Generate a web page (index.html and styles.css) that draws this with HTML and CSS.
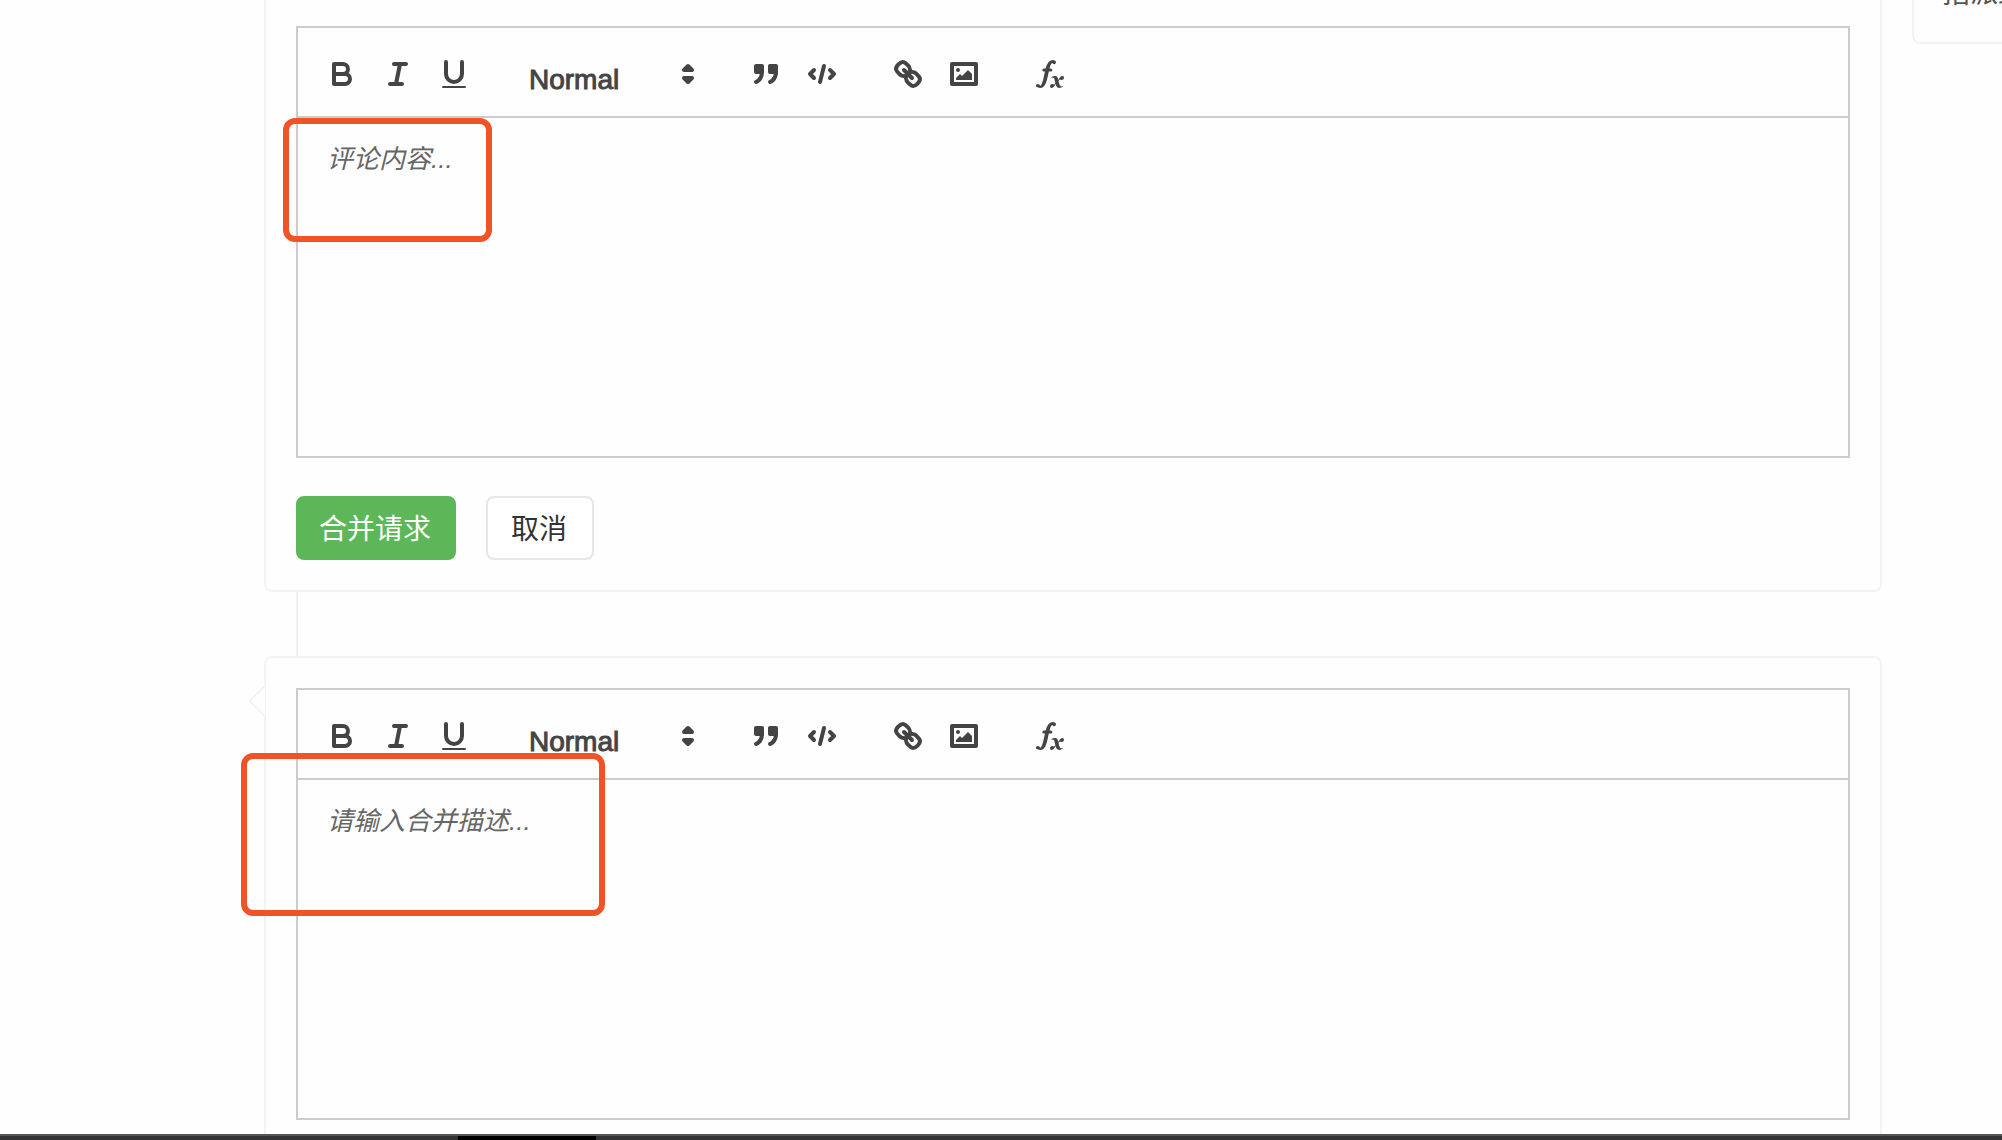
FILE: index.html
```html
<!DOCTYPE html>
<html lang="zh-CN">
<head>
    <meta charset="UTF-8">
    <meta name="viewport" content="width=device-width, initial-scale=1.0">
    <title>合并请求</title>
    <link rel="stylesheet" href="styles.css">
</head>
<body>
    <!-- Toolbar icons -->
    <svg class="sprite" aria-hidden="true">
        <symbol id="i-bold" viewBox="0 0 18 18">
            <path class="stroke" d="M5,4H9.5A2.5,2.5,0,0,1,12,6.5v0A2.5,2.5,0,0,1,9.5,9H5A0,0,0,0,1,5,9V4A0,0,0,0,1,5,4Z"/>
            <path class="stroke" d="M5,9h5.5A2.5,2.5,0,0,1,13,11.5v0A2.5,2.5,0,0,1,10.5,14H5a0,0,0,0,1,0,0V9A0,0,0,0,1,5,9Z"/>
        </symbol>
        <symbol id="i-italic" viewBox="0 0 18 18">
            <path class="stroke" d="M7,4H13M5,14H11M8,14L10,4"/>
        </symbol>
        <symbol id="i-underline" viewBox="0 0 18 18">
            <path class="stroke" d="M5,3V9a4.012,4.012,0,0,0,4,4H9a4.012,4.012,0,0,0,4-4V3"/>
            <rect class="fill" height="1" rx="0.5" ry="0.5" width="12" x="3" y="15"/>
        </symbol>
        <symbol id="i-updown" viewBox="0 0 18 18">
            <polygon class="stroke" points="7 11 9 13 11 11 7 11"/>
            <polygon class="stroke" points="7 7 9 5 11 7 7 7"/>
        </symbol>
        <symbol id="i-quote" viewBox="0 0 18 18">
            <rect class="fill stroke-on" height="3" width="3" x="4" y="5"/>
            <rect class="fill stroke-on" height="3" width="3" x="11" y="5"/>
            <path class="fill stroke-on" d="M7,8c0,4.031-3,5-3,5"/>
            <path class="fill stroke-on" d="M14,8c0,4.031-3,5-3,5"/>
        </symbol>
        <symbol id="i-code" viewBox="0 0 18 18">
            <polyline class="stroke" points="5 7 3 9 5 11"/>
            <polyline class="stroke" points="13 7 15 9 13 11"/>
            <line class="stroke" x1="10" x2="8" y1="5" y2="13"/>
        </symbol>
        <symbol id="i-link" viewBox="0 0 18 18">
            <line class="stroke" x1="7" x2="11" y1="7" y2="11"/>
            <path class="stroke" d="M8.9,4.577a3.476,3.476,0,0,1,.36,4.679A3.476,3.476,0,0,1,4.577,8.9C3.185,7.5,2.035,6.4,4.217,4.217S7.5,3.185,8.9,4.577Z"/>
            <path class="stroke" d="M13.423,9.1a3.476,3.476,0,0,0-4.679-.36,3.476,3.476,0,0,0,.36,4.679c1.392,1.392,2.5,2.542,4.679.36S14.815,10.5,13.423,9.1Z"/>
        </symbol>
        <symbol id="i-image" viewBox="0 0 18 18">
            <rect class="stroke" height="10" width="12" x="3" y="4"/>
            <circle class="fill" cx="6" cy="7" r="1"/>
            <polyline class="fill" points="5 12 5 11 7 9 8 10 11 7 13 9 13 12 5 12"/>
        </symbol>
        <symbol id="i-formula" viewBox="0 0 18 18">
            <path class="fill" d="M11.759,2.482a2.561,2.561,0,0,0-3.53.607A7.656,7.656,0,0,0,6.8,6.2C6.109,9.188,5.275,14.677,4.15,14.927a1.545,1.545,0,0,0-1.3-.933A0.922,0.922,0,0,0,2,15.036S1.954,16,4.119,16s3.091-2.691,3.7-5.553c0.177-.826.36-1.726,0.554-2.6L8.775,6.2c0.381-1.421.807-2.521,1.306-2.676a1.014,1.014,0,0,0,1.02.56A0.966,0.966,0,0,0,11.759,2.482Z"/>
            <rect class="fill" height="1.6" rx="0.8" ry="0.8" width="5" x="5.15" y="6.2"/>
            <path class="fill" d="M13.663,12.027a1.662,1.662,0,0,1,.266-0.276q0.193,0.069.456,0.138a2.1,2.1,0,0,0,.535.069,1.075,1.075,0,0,0,.767-0.3,1.044,1.044,0,0,0,.314-0.8,0.84,0.84,0,0,0-.238-0.619,0.8,0.8,0,0,0-.594-0.239,1.154,1.154,0,0,0-.781.3,4.607,4.607,0,0,0-.781,1q-0.091.15-.218,0.346l-0.246.38c-0.068-.288-0.137-0.582-0.212-0.885-0.459-1.847-2.494-.984-2.941-0.8-0.482.2-.353,0.647-0.094,0.529a0.869,0.869,0,0,1,1.281.585c0.217,0.751.377,1.436,0.527,2.038a5.688,5.688,0,0,1-.362.467,2.69,2.69,0,0,1-.264.271q-0.221-.08-0.471-0.147a2.029,2.029,0,0,0-.522-0.066,1.079,1.079,0,0,0-.768.3A1.058,1.058,0,0,0,9,15.131a0.82,0.82,0,0,0,.832.852,1.134,1.134,0,0,0,.787-0.3,5.11,5.11,0,0,0,.776-0.993q0.141-.219.215-0.34c0.046-.076.122-0.194,0.223-0.346a2.786,2.786,0,0,0,.918,1.726,2.582,2.582,0,0,0,2.376-.185c0.317-.181.212-0.565,0-0.494A0.807,0.807,0,0,1,14.176,15a5.159,5.159,0,0,1-.913-2.446l0,0Q13.487,12.24,13.663,12.027Z"/>
        </symbol>
    </svg>

    <div class="page">
        <main class="timeline">
            <form class="card card-first">
                <div class="editor">
                    <div class="toolbar">
                        <div class="formats">
                            <button type="button" class="tool" aria-label="Bold"><svg><use href="#i-bold"/></svg></button>
                            <button type="button" class="tool" aria-label="Italic"><svg><use href="#i-italic"/></svg></button>
                            <button type="button" class="tool" aria-label="Underline"><svg><use href="#i-underline"/></svg></button>
                        </div>
                        <div class="picker">
                            <select aria-label="Heading">
                                <option>Normal</option>
                            </select>
                            <svg><use href="#i-updown"/></svg>
                        </div>
                        <div class="formats">
                            <button type="button" class="tool" aria-label="Quote"><svg><use href="#i-quote"/></svg></button>
                            <button type="button" class="tool" aria-label="Code"><svg><use href="#i-code"/></svg></button>
                        </div>
                        <div class="formats">
                            <button type="button" class="tool" aria-label="Link"><svg><use href="#i-link"/></svg></button>
                            <button type="button" class="tool" aria-label="Image"><svg><use href="#i-image"/></svg></button>
                        </div>
                        <div class="formats">
                            <button type="button" class="tool" aria-label="Formula"><svg><use href="#i-formula"/></svg></button>
                        </div>
                    </div>
                    <textarea class="content" aria-label="评论内容" placeholder="评论内容..."></textarea>
                    <div class="mark mark-comment"></div>
                </div>
                <div class="actions">
                    <button type="submit" class="btn btn-green">合并请求</button>
                    <button type="button" class="btn btn-plain">取消</button>
                </div>
            </form>

            <div class="connector"></div>

            <form class="card card-arrow">
                <div class="editor">
                    <div class="toolbar">
                        <div class="formats">
                            <button type="button" class="tool" aria-label="Bold"><svg><use href="#i-bold"/></svg></button>
                            <button type="button" class="tool" aria-label="Italic"><svg><use href="#i-italic"/></svg></button>
                            <button type="button" class="tool" aria-label="Underline"><svg><use href="#i-underline"/></svg></button>
                        </div>
                        <div class="picker">
                            <select aria-label="Heading">
                                <option>Normal</option>
                            </select>
                            <svg><use href="#i-updown"/></svg>
                        </div>
                        <div class="formats">
                            <button type="button" class="tool" aria-label="Quote"><svg><use href="#i-quote"/></svg></button>
                            <button type="button" class="tool" aria-label="Code"><svg><use href="#i-code"/></svg></button>
                        </div>
                        <div class="formats">
                            <button type="button" class="tool" aria-label="Link"><svg><use href="#i-link"/></svg></button>
                            <button type="button" class="tool" aria-label="Image"><svg><use href="#i-image"/></svg></button>
                        </div>
                        <div class="formats">
                            <button type="button" class="tool" aria-label="Formula"><svg><use href="#i-formula"/></svg></button>
                        </div>
                    </div>
                    <textarea class="content" aria-label="合并描述" placeholder="请输入合并描述..."></textarea>
                    <div class="mark mark-merge"></div>
                </div>
            </form>
        </main>

        <aside class="sidebar">
            <div class="side-title">指派给</div>
        </aside>
    </div>

    <div class="dock"><div class="dock-item"></div></div>
</body>
</html>
```
FILE: styles.css
```css
* {
    box-sizing: border-box;
}
body {
    margin: 0;
    height: 100vh;
    overflow: hidden;
    background: #fefefe;
    color: #333;
    font-family: "Liberation Sans", "Noto Sans CJK SC", sans-serif;
    font-size: 28px;
}
button, select, textarea {
    font-family: inherit;
    margin: 0;
}
.sprite {
    display: none;
}
.page {
    display: flex;
    align-items: flex-start;
    gap: 30px;
    padding-left: 264px;
}
.timeline {
    flex: 1;
    min-width: 0;
}

/* cards */
.card {
    position: relative;
    padding: 30px;
    border: 2px solid #f3f3f3;
    border-radius: 8px;
}
.card-first {
    padding-top: 26px;
    border-top: 0;
    border-top-left-radius: 0;
    border-top-right-radius: 0;
}
.card-arrow::before {
    content: "";
    position: absolute;
    left: -13px;
    top: 31px;
    width: 22px;
    height: 22px;
    background: #fefefe;
    border-left: 2px solid #f3f3f3;
    border-bottom: 2px solid #f3f3f3;
    transform: rotate(45deg);
    clip-path: polygon(0 0, 100% 100%, 0 100%);
}
.connector {
    height: 64px;
    margin-left: 32px;
    border-left: 2px solid #eee;
}

/* editor */
.editor {
    position: relative;
    border: 2px solid #ccc;
}
.toolbar {
    display: flex;
    gap: 30px;
    height: 90px;
    padding: 22px 16px 0;
    border-bottom: 2px solid #ccc;
}
.formats {
    display: flex;
}
.tool {
    width: 56px;
    height: 48px;
    padding: 6px 10px;
    background: none;
    border: 0;
    cursor: pointer;
}
.tool svg, .picker svg {
    display: block;
    width: 36px;
    height: 36px;
}
.stroke {
    fill: none;
    stroke: #444;
    stroke-width: 2;
    stroke-linecap: round;
    stroke-linejoin: round;
}
.fill {
    fill: #444;
}
.stroke-on {
    stroke: #444;
    stroke-width: 2;
    stroke-linecap: round;
    stroke-linejoin: round;
}
.picker {
    position: relative;
    width: 196px;
    height: 48px;
}
.picker select {
    width: 100%;
    height: 60px;
    padding: 0 40px 2px 17px;
    appearance: none;
    background: none;
    border: 0;
    color: #444;
    font-size: 28px;
    -webkit-text-stroke: 1px #444;
}
.picker svg {
    position: absolute;
    right: 2px;
    top: 6px;
}
.content {
    display: block;
    width: 100%;
    height: 338px;
    padding: 24px 29px;
    background: none;
    border: 0;
    resize: none;
    outline: 0;
    font-size: 26px;
    line-height: 34px;
}
.content::placeholder {
    color: #666;
    font-style: italic;
}

/* buttons */
.actions {
    display: flex;
    gap: 30px;
    padding-top: 38px;
}
.btn {
    height: 64px;
    border: 2px solid #e6e6e6;
    border-radius: 8px;
    font-size: 28px;
    cursor: pointer;
}
.btn-green {
    padding: 0 23px 2px 21px;
    background: #5bb757;
    border-color: #5bb757;
    color: #fff;
}
.btn-plain {
    padding: 0 25px 2px 23px;
    background: #fff;
    color: #333;
}

/* red highlight frames over the editors */
.mark {
    position: absolute;
    border: 6px solid #f15226;
    border-radius: 12px;
    pointer-events: none;
}
.mark-comment {
    left: -15px;
    top: 90px;
    width: 209px;
    height: 124px;
}
.mark-merge {
    left: -57px;
    top: 63px;
    width: 364px;
    height: 163px;
}

/* sidebar */
.sidebar {
    width: 90px;
    height: 44px;
    overflow: hidden;
    padding-left: 28px;
    border-left: 2px solid #f3f3f3;
    border-bottom: 2px solid #f3f3f3;
    border-bottom-left-radius: 8px;
}
.side-title {
    margin-top: -26px;
    line-height: 40px;
    white-space: nowrap;
    color: #555;
}

/* dark strip along the bottom */
.dock {
    position: fixed;
    left: 0;
    right: 0;
    bottom: 0;
    height: 6px;
    padding-left: 458px;
    background: #333335;
    border-top: 2px solid #555;
}
.dock-item {
    width: 138px;
    height: 4px;
    background: #000;
}
```
